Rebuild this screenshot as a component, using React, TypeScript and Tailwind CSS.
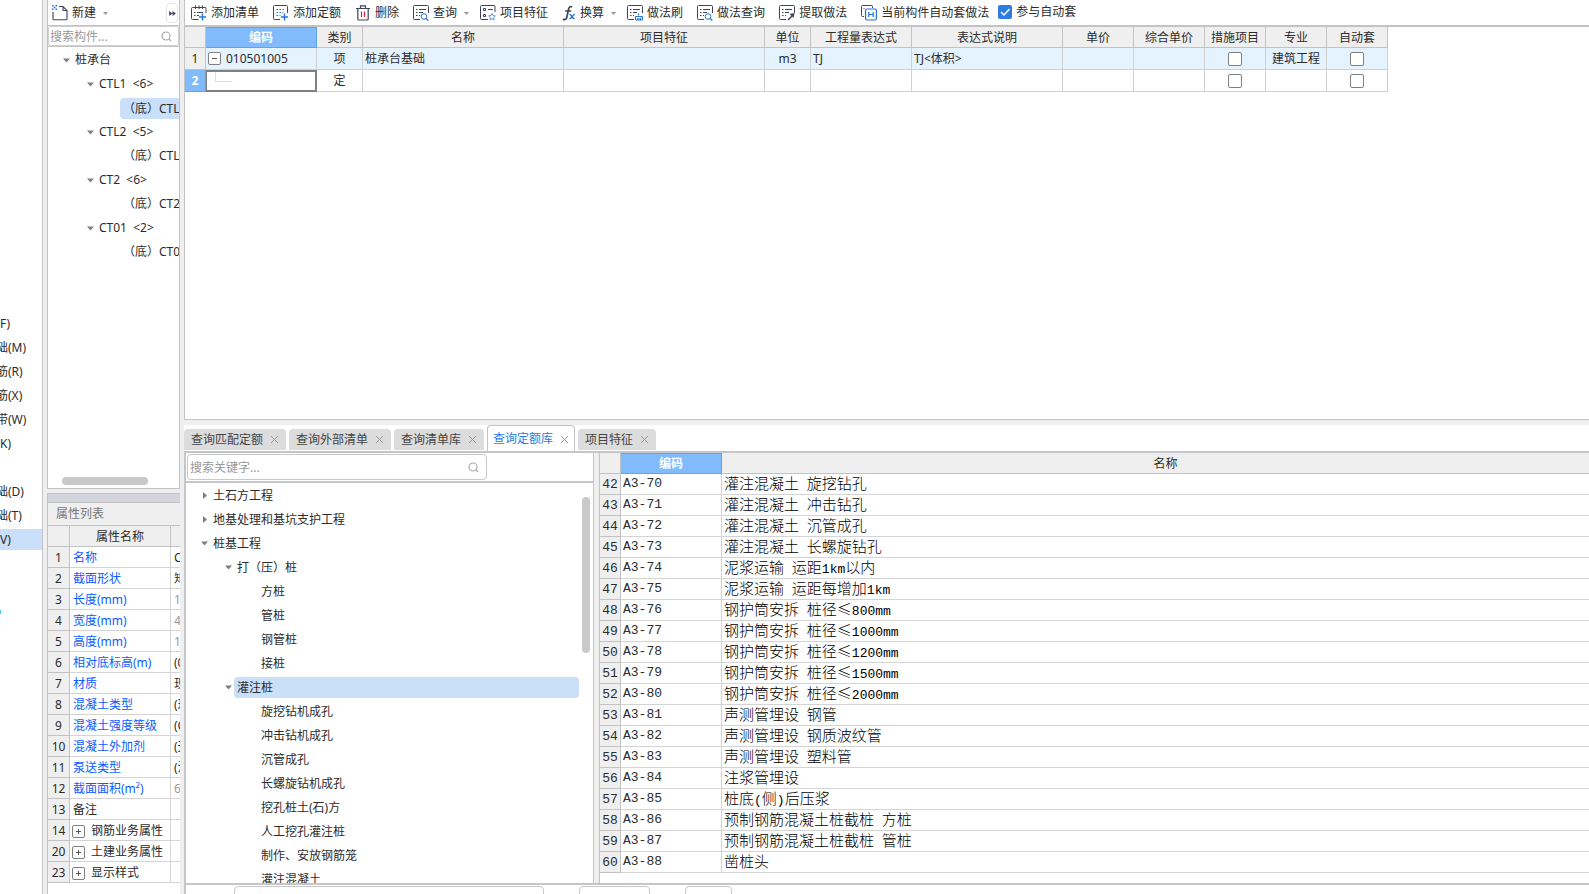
import React from 'react';

type IconKind =
  | 'addList'
  | 'addQuota'
  | 'delete'
  | 'query'
  | 'feature'
  | 'fx'
  | 'brush'
  | 'extract'
  | 'auto';

const DARK = '#3f4459';
const BLUE = '#1f74e0';

function ListFrame() {
  return (
    <g fill="none" stroke={DARK}>
      <path d="M7 14.5H1.5a1 1 0 0 1-1-1v-12a1 1 0 0 1 1-1h13a1 1 0 0 1 1 1V8" />
      <path d="M3 4.5h1.500M6 4.500h7M3 7.500h1.500M6 7.500h4M3 10.500h1.500M6 10.500h1" />
    </g>
  );
}

function Icon({ kind }: { kind: IconKind }) {
  if (kind === 'fx') {
    return (
      <svg width="14" height="16" viewBox="0 0 14 16" fill="none" aria-hidden="true">
        <path d="M10 2.2C8.300 .6 7 2 6.500 4.500L5 11.500C4.500 14.300 3 15.500 1 14M3.200 6h6" stroke={DARK} strokeWidth="1.700" />
        <path d="M7.500 9.500c2-.8 2 4.500 5 4M12.800 9.300c-2 .2-3 4.700-5.500 4.400" stroke={BLUE} strokeWidth="1.400" />
      </svg>
    );
  }
  return (
    <svg width="16" height="16" viewBox="0 0 16 16" fill="none" aria-hidden="true">
      {kind === 'addList' && (
        <>
          <path d="M7.500 14.500h-6a1 1 0 0 1-1-1v-10a1 1 0 0 1 1-1h12.500a1 1 0 0 1 1 1V8" stroke={DARK} />
          <path d="M4.500 .5v3.500M8 .5v3.500M11.500 .5v3.500M3 7.500h1.500M6 7.500h6M3 10.500h1.500M6 10.500h2" stroke={DARK} />
          <path d="M11.500 8.500v7M8 12h7" stroke={BLUE} strokeWidth="1.400" />
        </>
      )}
      {kind === 'addQuota' && (
        <>
          <path d="M7 14.500H1.500a1 1 0 0 1-1-1v-12a1 1 0 0 1 1-1h12a1 1 0 0 1 1 1V8" stroke={DARK} />
          <path d="M3.500 4.500h9M3.500 7.500h7M3.500 10.500h4" stroke={BLUE} strokeDasharray="1.500 1.500" />
          <path d="M11.500 8.500v7M8 12h7" stroke={BLUE} strokeWidth="1.400" />
        </>
      )}
      {kind === 'delete' && (
        <>
          <path d="M1 3.500h14M5.500 3V.8h5V3M2.800 3.500V14a1 1 0 0 0 1 1h8.400a1 1 0 0 0 1-1V3.500" stroke={DARK} strokeWidth="1.200" />
          <path d="M6.500 6.500v5.500M9.500 6.500v5.500" stroke="#e0262c" strokeWidth="1.200" />
        </>
      )}
      {kind === 'query' && (
        <>
          <ListFrame />
          <circle cx="11" cy="11.500" r="2.800" stroke={BLUE} />
          <path d="m13 13.500 2.300 2" stroke={BLUE} strokeWidth="1.300" />
        </>
      )}
      {kind === 'feature' && (
        <>
          <path d="M8 14.500H1.500a1 1 0 0 1-1-1v-12a1 1 0 0 1 1-1h12.500a1 1 0 0 1 1 1V7" stroke={DARK} />
          <path d="M3.500 3.500h2v2h-2zM3.500 9.500h2v2h-2zM8 4.500h5" stroke={DARK} />
          <path d="m12 8.500 1 2.100 2.400.3-1.800 1.600.5 2.400-2.100-1.200-2.100 1.200.5-2.400-1.800-1.600 2.400-.3z" stroke="#5b9bea" />
        </>
      )}
      {kind === 'brush' && (
        <>
          <ListFrame />
          <path d="M11.500 8.500v2M9 11.500h6M8.500 15v-3.500h7V15z" stroke={BLUE} />
          <path d="M10.500 13v2M12 13v2M13.500 13v2" stroke={BLUE} />
        </>
      )}
      {kind === 'extract' && (
        <>
          <ListFrame />
          <path d="m9 15 4-4" stroke={DARK} strokeWidth="1.500" />
          <path d="m10.500 9 4 4L15.500 8z" fill={DARK} />
        </>
      )}
      {kind === 'auto' && (
        <>
          <path d="M3 11.500H1.500a1 1 0 0 1-1-1v-9a1 1 0 0 1 1-1h9a1 1 0 0 1 1 1v1.500M2.500 3.500h1" stroke={DARK} />
          <rect x="4.600" y="4" width="10.800" height="11" rx="1.500" stroke={BLUE} strokeWidth="1.200" />
          <path d="M7.800 7v5M12.200 7v5M7.800 9.500h4.400" stroke={BLUE} strokeWidth="1.200" />
        </>
      )}
    </svg>
  );
}

function Caret({ open = true }: { open?: boolean }) {
  return (
    <svg width="7" height="7" viewBox="0 0 7 7" className="shrink-0" aria-hidden="true">
      <path d={open ? 'M0 1.500h7L3.500 5.500z' : 'M2 0v7l4-3.500z'} fill="#808080" />
    </svg>
  );
}

function SmallCaret() {
  return (
    <svg width="5" height="3" viewBox="0 0 5 3" aria-hidden="true">
      <path d="M0 0h5L2.500 3z" fill="#999" />
    </svg>
  );
}

function SearchGlyph() {
  return (
    <svg width="11" height="11" viewBox="0 0 11 11" fill="none" stroke="#aaa" className="shrink-0" aria-hidden="true">
      <circle cx="5" cy="5" r="4" strokeWidth="1.200" />
      <path d="m8 8 2 2" strokeWidth="1.200" />
    </svg>
  );
}

function ToggleBox({ plus, label }: { plus?: boolean; label: string }) {
  return (
    <button type="button" aria-label={label} className="shrink-0">
      <svg width="13" height="13" viewBox="0 0 13 13" fill="none" className="block" aria-hidden="true">
        <rect x=".5" y=".5" width="12" height="12" rx="1.500" fill="#fff" stroke="#808080" />
        <path d={plus ? 'M4 6.500h5M6.500 4v5' : 'M4 6.500h5'} stroke="#555" />
      </svg>
    </button>
  );
}

const categories: { text: string; kind: 'full' | 'cut' }[] = [
  { text: 'F)', kind: 'full' },
  { text: '础(M)', kind: 'cut' },
  { text: '筋(R)', kind: 'cut' },
  { text: '筋(X)', kind: 'cut' },
  { text: '带(W)', kind: 'cut' },
  { text: 'K)', kind: 'full' },
  { text: '', kind: 'full' },
  { text: '础(D)', kind: 'cut' },
  { text: '础(T)', kind: 'cut' },
  { text: 'V)', kind: 'full' },
];

function CategoryStrip() {
  return (
    <nav className="relative w-[43px] shrink-0 overflow-hidden border-r border-[#c3c3c3] bg-white pt-[311px]">
      {categories.map((c, i) => (
        <div key={i} className="flex h-6 items-center">
          <div className={i === 9 ? 'h-[21px] w-full bg-[#c9dffa] leading-[21px]' : 'h-[21px] w-full leading-[21px]'}>
            <span className={c.kind === 'cut' ? '-ml-1 whitespace-nowrap' : 'whitespace-nowrap'}>{c.text}</span>
          </div>
        </div>
      ))}
      <span className="absolute top-[610px] left-0 h-1 w-px bg-[#3fd0f5]" />
    </nav>
  );
}

const components: { text: string; level: 0 | 1 | 2; selected?: boolean }[] = [
  { text: '桩承台', level: 0 },
  { text: 'CTL1  <6>', level: 1 },
  { text: '（底）CTL1-1', level: 2, selected: true },
  { text: 'CTL2  <5>', level: 1 },
  { text: '（底）CTL2-1', level: 2 },
  { text: 'CT2  <6>', level: 1 },
  { text: '（底）CT2-1', level: 2 },
  { text: 'CT01  <2>', level: 1 },
  { text: '（底）CT01-1', level: 2 },
];

const props: { n: number; name: string; value?: string; tone: 'blue' | 'dark' | 'group'; dim?: boolean }[] = [
  { n: 1, name: '名称', value: 'CTL1', tone: 'blue' },
  { n: 2, name: '截面形状', value: '矩形', tone: 'blue' },
  { n: 3, name: '长度(mm)', value: '1500', tone: 'blue', dim: true },
  { n: 4, name: '宽度(mm)', value: '400', tone: 'blue', dim: true },
  { n: 5, name: '高度(mm)', value: '1500', tone: 'blue', dim: true },
  { n: 6, name: '相对底标高(m)', value: '(0)', tone: 'blue' },
  { n: 7, name: '材质', value: '现浇', tone: 'blue' },
  { n: 8, name: '混凝土类型', value: '(现浇)', tone: 'blue' },
  { n: 9, name: '混凝土强度等级', value: '(C30)', tone: 'blue' },
  { n: 10, name: '混凝土外加剂', value: '(无)', tone: 'blue' },
  { n: 11, name: '泵送类型', value: '(混凝土泵)', tone: 'blue' },
  { n: 12, name: '截面面积(m²)', value: '6', tone: 'blue', dim: true },
  { n: 13, name: '备注', tone: 'dark' },
  { n: 14, name: '钢筋业务属性', tone: 'group' },
  { n: 20, name: '土建业务属性', tone: 'group' },
  { n: 23, name: '显示样式', tone: 'group' },
];

function ComponentPanel() {
  return (
    <aside className="flex w-[133px] shrink-0 flex-col">
      <div className="flex h-[489px] shrink-0 flex-col border-x border-b border-[#c3c3c3] bg-white">
        <div className="flex h-[26px] shrink-0 items-center border-b border-[#c3c3c3] pt-px pl-1">
          <button type="button" className="flex items-center gap-1">
            <svg width="16" height="16" viewBox="0 0 16 16" fill="none" aria-hidden="true">
              <path d="M7 1.500h4l4 4V14a.8.8 0 0 1-.8.800H1.800A.8.8 0 0 1 1 14V7M11 1.500v4h4" stroke={DARK} strokeWidth="1.100" />
              <path d="M0 0h1.500v1.500H0zM3.500 0H5v1.500H3.500zM1.700 1.700h1.600v1.600H1.700zM0 3.500h1.500V5H0zM3.500 3.500H5V5H3.500z" fill={BLUE} />
            </svg>
            <span>新建</span>
            <span className="pl-[3px]">
              <SmallCaret />
            </span>
          </button>
          <button type="button" aria-label="展开" className="mr-px ml-auto flex h-5 w-3 shrink-0 items-center justify-center rounded border border-[#e4e4e4]">
            <svg width="7" height="5" viewBox="0 0 8 6" className="shrink-0" aria-hidden="true">
              <path d="M0 0v6l4-3zM4 0v6l4-3z" fill={DARK} />
            </svg>
          </button>
        </div>
        <label className="flex h-5 shrink-0 items-center rounded-xs border border-[#d0d0d0] pr-[6px]">
          <input aria-label="搜索构件" placeholder="搜索构件..." className="min-w-0 flex-1 pt-px pl-px outline-none placeholder:text-[#999]" />
          <SearchGlyph />
        </label>
        <div className="min-h-0 flex-1 overflow-hidden border-t border-[#c3c3c3] pt-px">
          {components.map((c) => (
            <div
              key={c.text}
              className={
                c.level === 0
                  ? 'flex h-6 items-center gap-[5px] pl-[15px]'
                  : c.level === 1
                    ? 'flex h-6 items-center gap-[5px] pl-[39px]'
                    : 'flex h-6 items-center pl-[72px]'
              }
            >
              {c.level < 2 && <Caret />}
              <span
                className={
                  c.selected
                    ? 'h-[21px] flex-1 rounded-l bg-[#c9dffa] pl-[3px] leading-[21px] whitespace-pre'
                    : c.level === 2
                      ? 'pl-[3px] whitespace-pre'
                      : 'whitespace-pre'
                }
              >
                {c.text}
              </span>
            </div>
          ))}
        </div>
        <div className="mb-[3px] ml-[14px] h-2 w-[86px] shrink-0 rounded-full bg-[#c9c9c9]" />
      </div>
      <div className="mt-1 flex min-h-0 flex-1 flex-col overflow-hidden border-l border-[#c3c3c3] bg-white">
        <div className="h-[10px] shrink-0 border-y border-[#c3c3c3] bg-[#d4d5dc]" />
        <h2 className="h-[23px] shrink-0 border-b border-[#c3c3c3] bg-[#efefef] pl-2 leading-[21px] text-[#777]">属性列表</h2>
        <table className="w-full table-fixed border-separate border-spacing-0">
          <colgroup>
            <col className="w-[22px]" />
            <col className="w-[101px]" />
            <col />
          </colgroup>
          <thead>
            <tr>
              <th className="h-[21px] border-r border-b border-[#c3c3c3] bg-[#efefef] p-0" aria-label="序号" />
              <th className="border-r border-b border-[#c3c3c3] bg-[#efefef] p-0 pt-[2px] font-normal">属性名称</th>
              <th className="border-b border-[#c3c3c3] bg-[#efefef] p-0" aria-label="属性值" />
            </tr>
          </thead>
          <tbody>
            {props.map((p) => (
              <tr key={p.n}>
                <td className="h-[21px] border-r border-b border-[#c3c3c3] bg-[#efefef] p-0 pt-[2px] text-center">{p.n}</td>
                <td className="border-r border-b border-[#d4d4d4] p-0 pt-[2px] whitespace-nowrap">
                  {p.tone === 'group' ? (
                    <span className="flex items-center gap-[6px] pl-[2px]">
                      <ToggleBox plus label={`展开${p.name}`} />
                      {p.name}
                    </span>
                  ) : (
                    <span className={p.tone === 'blue' ? 'pl-[3px] text-[#0a5cff]' : 'pl-[3px]'}>{p.name}</span>
                  )}
                </td>
                <td
                  className={
                    p.dim
                      ? 'overflow-hidden border-b border-[#d4d4d4] p-0 pt-[2px] pl-[3px] whitespace-nowrap text-[#999]'
                      : 'overflow-hidden border-b border-[#d4d4d4] p-0 pt-[2px] pl-[3px] whitespace-nowrap'
                  }
                >
                  {p.value}
                </td>
              </tr>
            ))}
          </tbody>
        </table>
      </div>
    </aside>
  );
}

const tools: { icon: IconKind; label: string; menu?: boolean }[] = [
  { icon: 'addList', label: '添加清单' },
  { icon: 'addQuota', label: '添加定额' },
  { icon: 'delete', label: '删除' },
  { icon: 'query', label: '查询', menu: true },
  { icon: 'feature', label: '项目特征' },
  { icon: 'fx', label: '换算', menu: true },
  { icon: 'brush', label: '做法刷' },
  { icon: 'query', label: '做法查询' },
  { icon: 'extract', label: '提取做法' },
  { icon: 'auto', label: '当前构件自动套做法' },
];

function Toolbar() {
  return (
    <div className="flex h-[27px] shrink-0 items-center gap-[9px] border-b-2 border-[#c3c3c3] pt-px pl-[6px]">
      <div className="flex items-center gap-[14px]">
        {tools.map((t) => (
          <button key={t.label} type="button" className="flex shrink-0 items-center gap-1">
            <Icon kind={t.icon} />
            <span>{t.label}</span>
            {t.menu && (
              <span className="-mr-[3px] pl-[3px]">
                <SmallCaret />
              </span>
            )}
          </button>
        ))}
      </div>
      <label className="flex shrink-0 items-center gap-1 pb-[3px]">
        <span className="relative flex h-[14px] w-[14px]">
          <input type="checkbox" defaultChecked className="h-[14px] w-[14px] appearance-none rounded-xs bg-[#2b7de1]" />
          <svg width="14" height="14" viewBox="0 0 14 14" fill="none" className="pointer-events-none absolute inset-0" aria-hidden="true">
            <path d="m3 7 3 3 5.500-6" stroke="#fff" strokeWidth="1.500" />
          </svg>
        </span>
        参与自动套
      </label>
    </div>
  );
}

const headers = ['类别', '名称', '项目特征', '单位', '工程量表达式', '表达式说明', '单价', '综合单价', '措施项目', '专业', '自动套'];

function Tick({ label }: { label: string }) {
  return <input type="checkbox" aria-label={label} className="mx-auto block h-[14px] w-[14px] appearance-none rounded-xs border border-[#808080] bg-white" />;
}

function MethodTable() {
  const cell = 'border-r border-b border-[#d0d0d0] p-0';
  return (
    <table className="w-[1203px] table-fixed border-separate border-spacing-0">
      <colgroup>
        <col className="w-[21px]" />
        <col className="w-[111px]" />
        <col className="w-[46px]" />
        <col className="w-[201px]" />
        <col className="w-[201px]" />
        <col className="w-[46px]" />
        <col className="w-[101px]" />
        <col className="w-[151px]" />
        <col className="w-[71px]" />
        <col className="w-[71px]" />
        <col className="w-[61px]" />
        <col className="w-[61px]" />
        <col className="w-[61px]" />
      </colgroup>
      <thead>
        <tr>
          <th className="h-[21px] border-r border-b border-[#c3c3c3] bg-[#efefef] p-0" aria-label="序号" />
          <th className="border border-l-0 border-[#5fa3ea] bg-[#82bbfb] p-0 pt-px font-bold text-white">编码</th>
          {headers.map((h) => (
            <th key={h} className="border-r border-b border-[#c3c3c3] bg-[#efefef] p-0 pt-[2px] font-normal">
              {h}
            </th>
          ))}
        </tr>
      </thead>
      <tbody>
        <tr className="bg-[#e5f3ff]">
          <td className="h-[22px] border-r border-b border-[#c3c3c3] bg-[#efefef] p-0 text-center">1</td>
          <td className={cell}>
            <span className="flex items-center gap-[5px] pl-[2px]">
              <ToggleBox label="收起" />
              010501005
            </span>
          </td>
          <td className="border-r border-b border-[#d0d0d0] p-0 text-center">项</td>
          <td className="border-r border-b border-[#d0d0d0] p-0 pl-[2px]">桩承台基础</td>
          <td className={cell} />
          <td className="border-r border-b border-[#d0d0d0] p-0 text-center">m3</td>
          <td className="border-r border-b border-[#d0d0d0] p-0 pl-[2px]">TJ</td>
          <td className="border-r border-b border-[#d0d0d0] p-0 pl-[2px]">TJ&lt;体积&gt;</td>
          <td className={cell} />
          <td className={cell} />
          <td className={cell}>
            <Tick label="措施项目 1" />
          </td>
          <td className="border-r border-b border-[#d0d0d0] p-0 text-center whitespace-nowrap">建筑工程</td>
          <td className={cell}>
            <Tick label="自动套 1" />
          </td>
        </tr>
        <tr>
          <td className="h-[22px] border-r border-b border-[#5fa3ea] bg-[#82bbfb] p-0 text-center font-bold text-white">2</td>
          <td className="border-2 border-l border-[#808080] p-0 align-top">
            <div className="ml-2 h-[10px] w-[17px] border-b border-l border-[#dedede]" />
          </td>
          <td className="border-r border-b border-[#d0d0d0] p-0 text-center">定</td>
          <td className={cell} />
          <td className={cell} />
          <td className={cell} />
          <td className={cell} />
          <td className={cell} />
          <td className={cell} />
          <td className={cell} />
          <td className={cell}>
            <Tick label="措施项目 2" />
          </td>
          <td className={cell} />
          <td className={cell}>
            <Tick label="自动套 2" />
          </td>
        </tr>
      </tbody>
    </table>
  );
}

const tabs = ['查询匹配定额', '查询外部清单', '查询清单库', '查询定额库', '项目特征'];

function TabBar() {
  return (
    <div role="tablist" className="flex h-[26px] shrink-0 items-end gap-[3px] bg-white">
      {tabs.map((t) => {
        const active = t === '查询定额库';
        return (
          <div
            key={t}
            className={
              active
                ? 'flex h-[26px] items-center gap-[7px] rounded-t border border-b-0 border-[#c3c3c3] bg-white px-[5px] pt-px text-[#2b7de1]'
                : 'mb-px flex h-[21px] items-center gap-[7px] rounded-t bg-[#dcdcdc] px-[7px] text-[#444]'
            }
          >
            <button type="button" role="tab" aria-selected={active}>
              {t}
            </button>
            <button type="button" aria-label={`关闭${t}`}>
              <svg width="9" height="9" viewBox="0 0 9 9" stroke="#9a9a9a" aria-hidden="true" className="block">
                <path d="m1 1 7 7M8 1 1 8" />
              </svg>
            </button>
          </div>
        );
      })}
    </div>
  );
}

const quotaTree: { text: string; level: 0 | 1 | 2; open?: boolean; selected?: boolean }[] = [
  { text: '土石方工程', level: 0 },
  { text: '地基处理和基坑支护工程', level: 0 },
  { text: '桩基工程', level: 0, open: true },
  { text: '打（压）桩', level: 1, open: true },
  { text: '方桩', level: 2 },
  { text: '管桩', level: 2 },
  { text: '钢管桩', level: 2 },
  { text: '接桩', level: 2 },
  { text: '灌注桩', level: 1, open: true, selected: true },
  { text: '旋挖钻机成孔', level: 2 },
  { text: '冲击钻机成孔', level: 2 },
  { text: '沉管成孔', level: 2 },
  { text: '长螺旋钻机成孔', level: 2 },
  { text: '挖孔桩土(石)方', level: 2 },
  { text: '人工挖孔灌注桩', level: 2 },
  { text: '制作、安放钢筋笼', level: 2 },
  { text: '灌注混凝土', level: 2 },
];

const levelPad = ['pl-[15px]', 'pl-[39px]', 'pl-[72px]'];

function QuotaTree() {
  return (
    <section className="flex w-[410px] shrink-0 flex-col border-r border-l-2 border-[#c3c6cb] bg-white">
      <div className="h-[30px] shrink-0 border-b-2 border-[#c3c6cb] p-px">
        <label className="flex h-[26px] w-[300px] items-center rounded border border-[#c9c9c9] pr-[7px]">
          <input aria-label="搜索关键字" placeholder="搜索关键字..." className="min-w-0 flex-1 pt-px pl-[2px] outline-none placeholder:text-[#999]" />
          <SearchGlyph />
        </label>
      </div>
      <div className="flex min-h-0 flex-1 overflow-hidden">
        <div className="flex-1">
          {quotaTree.map((q) => (
            <div key={q.text} className={`flex h-6 items-center gap-[2px] ${levelPad[q.level]}`}>
              {q.level < 2 && <Caret open={!!q.open} />}
              <span
                className={
                  q.selected
                    ? 'h-[21px] flex-1 rounded bg-[#c9dffa] pl-[3px] leading-[21px]'
                    : 'h-[21px] pl-[3px] leading-[21px]'
                }
              >
                {q.text}
              </span>
            </div>
          ))}
        </div>
        <div className="mt-[14px] mr-[3px] ml-[3px] h-[156px] w-2 shrink-0 rounded-full bg-[#c9c9c9]" />
      </div>
    </section>
  );
}

const quotas = [
  '灌注混凝土 旋挖钻孔',
  '灌注混凝土 冲击钻孔',
  '灌注混凝土 沉管成孔',
  '灌注混凝土 长螺旋钻孔',
  '泥浆运输 运距1km以内',
  '泥浆运输 运距每增加1km',
  '钢护筒安拆 桩径≤800mm',
  '钢护筒安拆 桩径≤1000mm',
  '钢护筒安拆 桩径≤1200mm',
  '钢护筒安拆 桩径≤1500mm',
  '钢护筒安拆 桩径≤2000mm',
  '声测管埋设 钢管',
  '声测管埋设 钢质波纹管',
  '声测管埋设 塑料管',
  '注浆管埋设',
  '桩底(侧)后压浆',
  '预制钢筋混凝土桩截桩 方桩',
  '预制钢筋混凝土桩截桩 管桩',
  '凿桩头',
];

/* Latin runs use the half-width face, Chinese runs the full-width one. */
function MixedText({ text }: { text: string }) {
  return (
    <>
      {text.split(/([\x20-\x7e]+)/).map((run, i) =>
        i % 2 === 1 ? (
          <span key={i} className="font-['Liberation_Mono',monospace] text-[13px]">
            {run}
          </span>
        ) : (
          run
        ),
      )}
    </>
  );
}

function QuotaTable() {
  return (
    <section className="min-w-0 flex-1 overflow-hidden border-l border-[#c3c3c3] bg-white">
      <table className="w-full table-fixed border-separate border-spacing-0">
        <colgroup>
          <col className="w-[21px]" />
          <col className="w-[101px]" />
          <col />
        </colgroup>
        <thead>
          <tr>
            <th className="h-[21px] border-r border-b border-[#c3c3c3] bg-[#efefef] p-0" aria-label="序号" />
            <th className="border border-l-0 border-[#5fa3ea] bg-[#82bbfb] p-0 pt-px font-bold text-white">编码</th>
            <th className="border-b border-[#c3c3c3] bg-[#efefef] p-0 pt-[2px] pl-5 font-normal">名称</th>
          </tr>
        </thead>
        <tbody>
          {quotas.map((q, i) => (
            <tr key={q}>
              <td className="h-[21px] border-r border-b border-[#c3c3c3] bg-[#efefef] p-0 pt-[2px] text-center font-['Liberation_Mono',monospace] text-[13px]">
                {i + 42}
              </td>
              <td className="border-r border-b border-[#d4d4d4] p-0 pl-[2px] font-['Liberation_Mono',monospace] text-[13px]">A3-{i + 70}</td>
              <td className="border-b border-[#d4d4d4] p-0 pl-[2px]">
                <div className="h-5 font-['Noto_Sans_CJK_SC',sans-serif] text-[15px] leading-[18px] font-light whitespace-nowrap text-black">
                  <MixedText text={q} />
                </div>
              </td>
            </tr>
          ))}
        </tbody>
      </table>
    </section>
  );
}

export default function App() {
  return (
    <div className="flex h-screen overflow-hidden bg-[#efefef] font-['Noto_Sans','Noto_Sans_CJK_SC',sans-serif] text-[12px] leading-4 text-[#2c2c2c]">
      <CategoryStrip />
      <div className="w-1 shrink-0" />
      <ComponentPanel />
      <div className="w-1 shrink-0" />
      <main className="flex min-w-0 flex-1 flex-col">
        <section className="h-[420px] shrink-0 overflow-hidden border-b border-l border-[#c3c3c3] bg-white">
          <Toolbar />
          <MethodTable />
        </section>
        <div className="h-[5px] shrink-0" />
        <TabBar />
        <div className="flex min-h-0 flex-1 border-t-2 border-b-2 border-[#c3c6cb]">
          <QuotaTree />
          <div className="w-[5px] shrink-0" />
          <QuotaTable />
        </div>
        <div className="flex h-[9px] shrink-0 items-start gap-[35px] overflow-hidden border-l-2 border-[#c3c6cb] bg-white pt-px pl-12">
          <input aria-label="章节" className="h-6 w-[310px] shrink-0 rounded border border-[#c9c9c9]" />
          <button type="button" aria-label="插入" className="h-6 w-[71px] shrink-0 rounded border border-[#c9c9c9]" />
          <button type="button" aria-label="关闭" className="h-6 w-[47px] shrink-0 rounded border border-[#c9c9c9]" />
        </div>
      </main>
    </div>
  );
}
